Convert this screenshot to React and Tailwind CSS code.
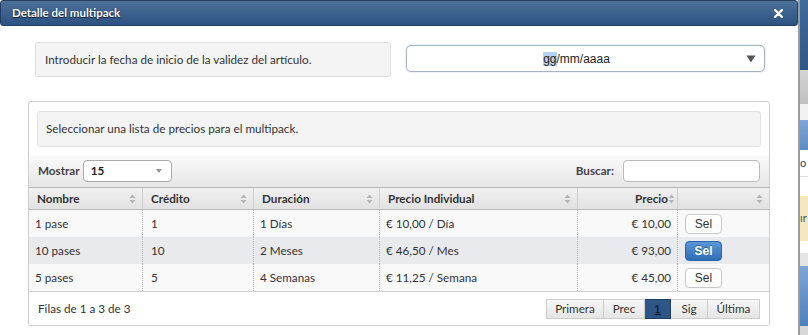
const rows = [
  { n: "1 pase", c: "1", d: "1 Días", pi: "€ 10,00 / Día", p: "€ 10,00", bg: "bg-[#f9f9f9]", active: false },
  { n: "10 pases", c: "10", d: "2 Meses", pi: "€ 46,50 / Mes", p: "€ 93,00", bg: "bg-[#e9eaee]", active: true },
  { n: "5 pases", c: "5", d: "4 Semanas", pi: "€ 11,25 / Semana", p: "€ 45,00", bg: "bg-[#f9f9f9]", active: false },
];

function SortIcon() {
  return (
    <svg width="7" height="10" viewBox="0 0 7 10" className="shrink-0">
      <path d="M3.5 0.5 L6.5 4 L0.5 4 Z" fill="#b5b5b5" />
      <path d="M3.5 9.5 L6.5 6 L0.5 6 Z" fill="#b5b5b5" />
    </svg>
  );
}

function Th({ label, w, right }) {
  return (
    <div
      className={`flex h-full items-center border-r border-[#cfcfcf] ${w} ${
        right ? "justify-end pr-[2px]" : "justify-between pl-[8px] pr-[6px]"
      }`}
    >
      <span>{label}</span>
      <SortIcon />
    </div>
  );
}

function SelButton({ active }) {
  return (
    <button
      className={`h-[20px] w-[37px] rounded-[4px] text-[12px] font-['Liberation_Sans',Arial,sans-serif] ${
        active
          ? "border border-[#2b64a8] bg-gradient-to-b from-[#5a97d8] to-[#2f6db5] font-bold text-white [text-shadow:0_-1px_0_rgba(0,0,0,.35)]"
          : "border border-[#c8c8c8] bg-white text-[#333]"
      }`}
    >
      Sel
    </button>
  );
}

export default function App() {
  return (
    <div className="flex h-[335px] w-[808px] overflow-hidden bg-white font-['Lato','Open_Sans',sans-serif] text-[11.7px] text-[#333]">
      {/* Modal */}
      <div className="flex w-[798px] shrink-0 flex-col">
        <div className="flex h-[26px] items-center justify-between rounded-[3px] border border-[#233f63] bg-gradient-to-b from-[#4d7199] to-[#2b5282] pl-[11px] pr-[14px]">
          <span className="text-[11.5px] font-bold text-white [text-shadow:0_1px_1px_rgba(0,0,0,.7),0_0_1px_rgba(0,0,0,.5)]">
            Detalle del multipack
          </span>
          <svg width="9" height="9" viewBox="0 0 9 9">
            <path d="M1 1 L8 8 M8 1 L1 8" stroke="white" strokeWidth="2.4" strokeLinecap="round" />
          </svg>
        </div>

        <div className="mt-[16px] flex items-start">
          <div className="ml-[35px] flex h-[35px] w-[356px] items-center rounded-[3px] border border-[#dedede] bg-[#f4f4f4] pl-[9px]">
            Introducir la fecha de inicio de la validez del artículo.
          </div>
          <div className="ml-[15px] mt-[3px] flex h-[27px] w-[359px] items-center rounded-[5px] border border-[#a9b3c2] bg-white pr-[8px] shadow-[0_0_2px_rgba(80,110,160,.35)] font-['Liberation_Sans',Arial,sans-serif] text-[12px] text-[#222]">
            <span className="flex-1 text-center">
              <span className="bg-[#b4d2f5]">gg</span>/mm/aaaa
            </span>
            <svg width="10" height="8" viewBox="0 0 10 8">
              <path d="M0.5 0.5 L9.5 0.5 L5 7.5 Z" fill="#555" />
            </svg>
          </div>
        </div>

        {/* Panel */}
        <div className="ml-[28px] mt-[24px] flex h-[225px] w-[742px] flex-col overflow-hidden rounded-[3px] border border-[#cdcdcd]">
          <div className="mx-[8px] mt-[9px] flex h-[36px] items-center rounded-[3px] border border-[#e2e2e2] bg-[#f4f4f4] pl-[8px]">
            Seleccionar una lista de precios para el multipack.
          </div>

          <div className="mt-[8px] flex h-[32px] items-center justify-between bg-gradient-to-b from-[#fafafa] to-[#e6e6e6] pl-[9px] pr-[9px]">
            <div className="flex items-center">
              <span className="font-bold text-[#444]">Mostrar</span>
              <div className="ml-[3px] flex h-[22px] w-[89px] items-center justify-between rounded-[4px] border border-[#aaa] bg-white pl-[7px] pr-[9px] font-bold text-[#222]">
                <span>15</span>
                <svg width="6" height="4" viewBox="0 0 6 4">
                  <path d="M0 0 L6 0 L3 4 Z" fill="#999" />
                </svg>
              </div>
            </div>
            <div className="flex items-center">
              <span className="font-bold text-[#444]">Buscar:</span>
              <div className="ml-[9px] h-[22px] w-[137px] rounded-[4px] border border-[#bbb] bg-white" />
            </div>
          </div>

          {/* Table header */}
          <div className="flex h-[23px] border-y border-[#b9b9b9] bg-gradient-to-b from-[#f0f0f0] to-[#e2e2e2] font-bold text-[#333]">
            <Th label="Nombre" w="w-[114px]" />
            <Th label="Crédito" w="w-[111px]" />
            <Th label="Duración" w="w-[126px]" />
            <Th label="Precio Individual" w="w-[198px]" />
            <Th label="Precio" w="w-[100px]" right />
            <div className="flex h-full flex-1 items-center justify-end pr-[6px]">
              <SortIcon />
            </div>
          </div>

          {rows.map((r) => (
            <div key={r.n} className={`flex h-[27px] items-center ${r.bg}`}>
              <div className="flex h-full w-[114px] items-center border-r border-dotted border-[#b5b5b5] pl-[6px]">{r.n}</div>
              <div className="flex h-full w-[111px] items-center border-r border-dotted border-[#b5b5b5] pl-[8px]">{r.c}</div>
              <div className="flex h-full w-[126px] items-center border-r border-dotted border-[#b5b5b5] pl-[6px]">{r.d}</div>
              <div className="flex h-full w-[198px] items-center border-r border-dotted border-[#b5b5b5] pl-[6px]">{r.pi}</div>
              <div className="flex h-full w-[100px] items-center justify-end border-r border-dotted border-[#b5b5b5] pr-[6px]">{r.p}</div>
              <div className="flex h-full flex-1 items-center pl-[7px]">
                <SelButton active={r.active} />
              </div>
            </div>
          ))}

          <div className="flex flex-1 items-center justify-between border-t border-[#cfcfcf] bg-white pl-[9px] pr-[9px]">
            <span>Filas de 1 a 3 de 3</span>
            <div className="flex h-[20px]">
              <span className="flex w-[58px] items-center justify-center border border-[#ccc] bg-gradient-to-b from-[#f7f7f7] to-[#e5e5e5]">Primera</span>
              <span className="flex w-[41px] items-center justify-center border border-l-0 border-[#ccc] bg-gradient-to-b from-[#f7f7f7] to-[#e5e5e5]">Prec</span>
              <span className="flex w-[26px] items-center justify-center border border-l-0 border-[#1e3d63] bg-[#2d5585] text-[#111] underline">1</span>
              <span className="flex w-[37px] items-center justify-center border border-l-0 border-[#ccc] bg-gradient-to-b from-[#f7f7f7] to-[#e5e5e5]">Sig</span>
              <span className="flex w-[52px] items-center justify-center border border-l-0 border-[#ccc] bg-gradient-to-b from-[#f7f7f7] to-[#e5e5e5]">Última</span>
            </div>
          </div>
        </div>
      </div>

      {/* Page behind the modal */}
      <div className="flex flex-1 flex-col border-l-2 border-[#9a9a9a] text-[11px]">
        <div className="h-[70px] bg-gradient-to-b from-[#3f6a9c] to-[#2f5686]" />
        <div className="h-[34px] bg-gradient-to-b from-[#d5d5d5] to-[#bfbfbf]" />
        <div className="h-[16px] bg-[#f2f2f2]" />
        <div className="h-[30px] bg-gradient-to-b from-[#7ea6d8] to-[#5e8bc6]" />
        <div className="flex h-[26px] items-center bg-white text-[#345]">o</div>
        <div className="h-[20px] border-t border-[#ddd] bg-white" />
        <div className="flex h-[45px] items-center bg-[#f4e6bd] text-[#555]">ır</div>
        <div className="h-[12px] bg-white" />
        <div className="h-[13px] bg-[#e5e5e5]" />
        <div className="h-[60px] bg-gradient-to-b from-[#7ea6d8] to-[#4f7fbf]" />
        <div className="flex-1 bg-[#d8d8d8]" />
      </div>
    </div>
  );
}
